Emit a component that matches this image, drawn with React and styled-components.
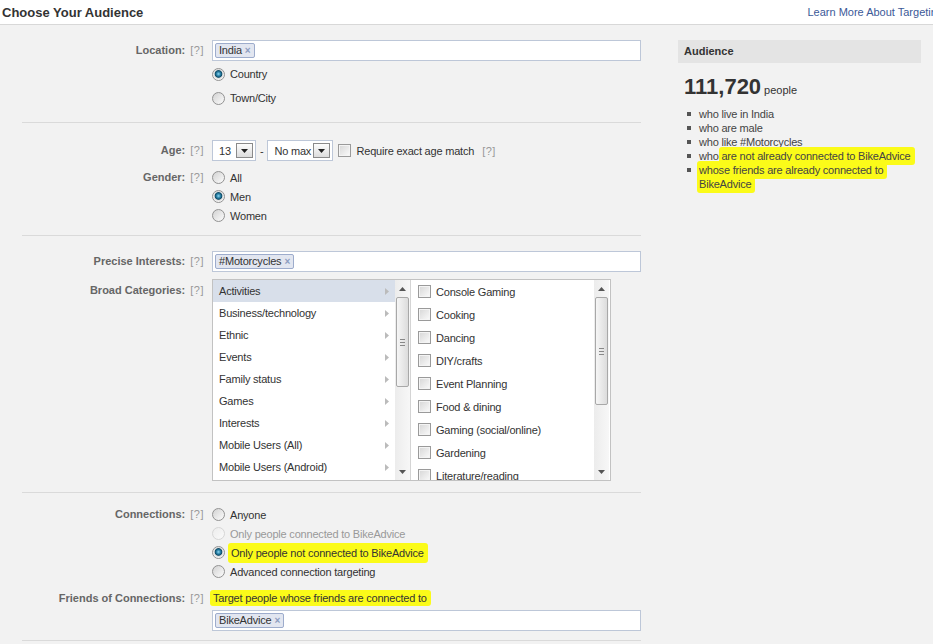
import styled, { createGlobalStyle } from "styled-components";

const GlobalStyle = createGlobalStyle`
    html, body {
        margin: 0;
        padding: 0;
    }
    body {
        background: #f2f2f2;
        font-family: "Liberation Sans", Arial, sans-serif;
        font-size: 11px;
        color: #333;
        overflow: hidden;
    }
`

const categories = [
    "Activities",
    "Business/technology",
    "Ethnic",
    "Events",
    "Family status",
    "Games",
    "Interests",
    "Mobile Users (All)",
    "Mobile Users (Android)",
]

const activities = [
    "Console Gaming",
    "Cooking",
    "Dancing",
    "DIY/crafts",
    "Event Planning",
    "Food & dining",
    "Gaming (social/online)",
    "Gardening",
    "Literature/reading",
]

function Token({ children }) {
    return (
        <Chip>
            {children}
            <ChipX>×</ChipX>
        </Chip>
    )
}

function Choice({ checked, disabled, height, children }) {
    return (
        <ChoiceRow $h={height} $disabled={disabled}>
            <Radio $checked={checked} $disabled={disabled} />
            {children}
        </ChoiceRow>
    )
}

function Dropdown({ value, width }) {
    return (
        <SelectBox $w={width}>
            <span>{value}</span>
            <DropBtn>
                <svg width="7" height="4" viewBox="0 0 7 4">
                    <path d="M0 0h7L3.5 4z" fill="#222" />
                </svg>
            </DropBtn>
        </SelectBox>
    )
}

function Scroll({ thumb }) {
    return (
        <ScrollTrack>
            <ScrollArrow>
                <svg width="7" height="4" viewBox="0 0 7 4">
                    <path d="M0 4h7L3.5 0z" fill="#555" />
                </svg>
            </ScrollArrow>
            <Thumb $h={thumb}>
                <Grip />
            </Thumb>
            <ScrollArrow $bottom>
                <svg width="7" height="4" viewBox="0 0 7 4">
                    <path d="M0 0h7L3.5 4z" fill="#555" />
                </svg>
            </ScrollArrow>
        </ScrollTrack>
    )
}

function Label({ text, line }) {
    return (
        <FieldLabel $line={line}>
            {text}
            <Help>[?]</Help>
        </FieldLabel>
    )
}

export default function App() {
    return (
        <>
            <GlobalStyle />
            <Header>
                <Title>Choose Your Audience</Title>
                <LearnMore>Learn More About Targeting</LearnMore>
            </Header>
            <Main>
                <Form>
                    <Section $pad="15px 0 12px">
                        <Row>
                            <Label text="Location:" line={21} />
                            <Control>
                                <TokenInput>
                                    <Token>India</Token>
                                </TokenInput>
                                <Choices $top={1}>
                                    <Choice checked height={24}>Country</Choice>
                                    <Choice height={24}>Town/City</Choice>
                                </Choices>
                            </Control>
                        </Row>
                    </Section>

                    <Section $pad="17px 0 10px">
                        <Row>
                            <Label text="Age:" line={21} />
                            <Control $inline>
                                <Dropdown value="13" width={44} />
                                <Dash>-</Dash>
                                <Dropdown value="No max" width={66} />
                                <Checkbox $left={5} />
                                <CheckText>Require exact age match</CheckText>
                                <Help $gap={8}>[?]</Help>
                            </Control>
                        </Row>
                        <Row $top={7}>
                            <Label text="Gender:" line={19} />
                            <Control>
                                <Choice height={19}>All</Choice>
                                <Choice checked height={19}>Men</Choice>
                                <Choice height={19}>Women</Choice>
                            </Control>
                        </Row>
                    </Section>

                    <Section $pad="15px 0 11px">
                        <Row>
                            <Label text="Precise Interests:" line={21} />
                            <Control>
                                <TokenInput>
                                    <Token>#Motorcycles</Token>
                                </TokenInput>
                            </Control>
                        </Row>
                        <Row $top={7}>
                            <Label text="Broad Categories:" line={22} />
                            <Control>
                                <Browser>
                                    <Pane $w={182}>
                                        {categories.map((c, i) => (
                                            <Category key={c} $active={i === 0}>
                                                {c}
                                                <svg width="4" height="7" viewBox="0 0 4 7">
                                                    <path d="M0 0l4 3.5L0 7z" fill="#bbb" />
                                                </svg>
                                            </Category>
                                        ))}
                                    </Pane>
                                    <Scroll thumb={90} />
                                    <PaneDivider />
                                    <Pane $w={183}>
                                        {activities.map((a) => (
                                            <Option key={a}>
                                                <Checkbox />
                                                <span>{a}</span>
                                            </Option>
                                        ))}
                                    </Pane>
                                    <Scroll thumb={108} />
                                </Browser>
                            </Control>
                        </Row>
                    </Section>

                    <Section $pad="12px 0 9px">
                        <Row>
                            <Label text="Connections:" line={19} />
                            <Control>
                                <Choice height={19}>Anyone</Choice>
                                <Choice disabled height={19}>Only people connected to BikeAdvice</Choice>
                                <Choice checked height={19}>
                                    <Mark>Only people not connected to BikeAdvice</Mark>
                                </Choice>
                                <Choice height={19}>Advanced connection targeting</Choice>
                            </Control>
                        </Row>
                        <Row $top={8}>
                            <Label text="Friends of Connections:" line={18} />
                            <Control>
                                <PlainLine>
                                    <Mark $tight>Target people whose friends are connected to</Mark>
                                </PlainLine>
                                <TokenInput $top={3}>
                                    <Token>BikeAdvice</Token>
                                </TokenInput>
                            </Control>
                        </Row>
                    </Section>
                </Form>

                <Sidebar>
                    <AudienceHead>Audience</AudienceHead>
                    <Count>
                        111,720<People>people</People>
                    </Count>
                    <Facts>
                        <li>who live in India</li>
                        <li>who are male</li>
                        <li>who like #Motorcycles</li>
                        <li>
                            who <Mark $side>are not already connected to BikeAdvice</Mark>
                        </li>
                        <li>
                            <Mark $side>whose friends are already connected to BikeAdvice</Mark>
                        </li>
                    </Facts>
                </Sidebar>
            </Main>
        </>
    )
}

const Header = styled.div`
    height: 24px;
    background: #fff;
    border-bottom: 1px solid #d8d8d8;
    display: flex;
    align-items: center;
    justify-content: space-between;
    padding-left: 2px;
    overflow: hidden;
    white-space: nowrap;
`
const Title = styled.h1`
    margin: 0;
    font-size: 13px;
    font-weight: bold;
    color: #333;
`
const LearnMore = styled.a`
    color: #3b5998;
    font-size: 11px;
    margin-right: -10px;
    cursor: pointer;
`
const Main = styled.div`
    display: flex;
`
const Form = styled.div`
    width: 678px;
    box-sizing: border-box;
    padding-left: 22px;
`
const Section = styled.div`
    width: 619px;
    padding: ${(p) => p.$pad};
    border-bottom: 1px solid #dadada;
`
const Row = styled.div`
    display: flex;
    margin-top: ${(p) => p.$top || 0}px;
`
const FieldLabel = styled.div`
    width: 182px;
    flex-shrink: 0;
    text-align: right;
    font-weight: bold;
    color: #666;
    line-height: ${(p) => p.$line}px;
    white-space: nowrap;
`
const Help = styled.span`
    font-weight: normal;
    color: #999;
    margin-left: ${(p) => p.$gap || 5}px;
    letter-spacing: 0.5px;
`
const Control = styled.div`
    margin-left: 8px;
    width: 429px;
    letter-spacing: -0.2px;
    ${(p) => p.$inline && "display: flex; align-items: center; height: 21px;"}
`
const TokenInput = styled.div`
    height: 21px;
    box-sizing: border-box;
    margin-top: ${(p) => p.$top || 0}px;
    border: 1px solid #bdc7d8;
    background: #fff;
    display: flex;
    align-items: center;
    padding-left: 2px;
`
const Chip = styled.span`
    height: 15px;
    box-sizing: border-box;
    line-height: 13px;
    border: 1px solid #9daccc;
    background: #e2e6f0;
    border-radius: 2px;
    padding: 0 3px;
    color: #333;
`
const ChipX = styled.span`
    color: #8d9cc0;
    font-size: 10px;
    font-weight: bold;
    margin-left: 3px;
`
const Choices = styled.div`
    margin-top: ${(p) => p.$top || 0}px;
`
const ChoiceRow = styled.div`
    height: ${(p) => p.$h}px;
    display: flex;
    align-items: center;
    color: ${(p) => (p.$disabled ? "#999" : "#333")};
    white-space: nowrap;
`
const Radio = styled.span`
    width: 13px;
    height: 13px;
    box-sizing: border-box;
    border-radius: 50%;
    flex-shrink: 0;
    margin-right: 5px;
    border: 1px solid ${(p) => (p.$disabled ? "#d6d6d6" : "#929292")};
    background: ${(p) =>
        p.$checked
            ? "radial-gradient(circle at 50% 45%, #8fd8f2 0, #2b82a8 2px, #0f4d69 3.4px, #dcdcdc 4.2px, #fbfbfb 6px)"
            : p.$disabled
            ? "linear-gradient(135deg, #ececec, #fafafa)"
            : "linear-gradient(135deg, #d2d2d2, #fcfcfc)"};
`
const SelectBox = styled.div`
    width: ${(p) => p.$w}px;
    height: 21px;
    box-sizing: border-box;
    border: 1px solid #bdc7d8;
    background: #fff;
    display: flex;
    align-items: center;
    justify-content: space-between;
    padding: 0 2px 0 6px;
    flex-shrink: 0;
    white-space: nowrap;
`
const DropBtn = styled.span`
    width: 17px;
    height: 15px;
    box-sizing: border-box;
    border: 1px solid #8a8a8a;
    background: linear-gradient(#fdfdfd, #dcdcdc);
    display: flex;
    align-items: center;
    justify-content: center;
`
const Dash = styled.span`
    margin: 0 4px;
    color: #333;
`
const Checkbox = styled.span`
    width: 13px;
    height: 13px;
    box-sizing: border-box;
    flex-shrink: 0;
    margin-left: ${(p) => p.$left || 0}px;
    border: 1px solid #9a9a9a;
    background: linear-gradient(135deg, #d6d6d6, #fbfbfb);
    box-shadow: inset 0 0 0 1px #f4f4f4;
`
const CheckText = styled.span`
    margin-left: 5px;
    color: #333;
    white-space: nowrap;
`
const Browser = styled.div`
    width: 399px;
    height: 202px;
    box-sizing: border-box;
    border: 1px solid #c2c2c2;
    background: #fff;
    display: flex;
    overflow: hidden;
`
const Pane = styled.div`
    width: ${(p) => p.$w}px;
    overflow: hidden;
    flex-shrink: 0;
`
const Category = styled.div`
    height: 22px;
    display: flex;
    align-items: center;
    justify-content: space-between;
    padding: 0 6px 0 6px;
    background: ${(p) => (p.$active ? "#d8dfea" : "transparent")};
    color: #333;
    white-space: nowrap;
`
const Option = styled.div`
    height: 23px;
    display: flex;
    align-items: center;
    gap: 5px;
    padding-left: 7px;
    color: #333;
    white-space: nowrap;
`
const PaneDivider = styled.div`
    width: 1px;
    background: #d4d4d4;
    flex-shrink: 0;
`
const ScrollTrack = styled.div`
    width: 15px;
    flex-shrink: 0;
    background: linear-gradient(to right, #ececec, #f7f7f7);
    display: flex;
    flex-direction: column;
    align-items: center;
`
const ScrollArrow = styled.div`
    height: 17px;
    width: 15px;
    display: flex;
    align-items: center;
    justify-content: center;
    margin-top: ${(p) => (p.$bottom ? "auto" : "0")};
`
const Thumb = styled.div`
    width: 13px;
    height: ${(p) => p.$h}px;
    box-sizing: border-box;
    border: 1px solid #a8a8a8;
    border-radius: 2px;
    background: linear-gradient(to right, #f6f6f6, #dcdcdc);
    display: flex;
    align-items: center;
    justify-content: center;
`
const Grip = styled.span`
    width: 5px;
    height: 5px;
    border-top: 1px solid #888;
    border-bottom: 1px solid #888;
    background: linear-gradient(#888, #888) center / 100% 1px no-repeat;
`
const PlainLine = styled.div`
    height: 18px;
    display: flex;
    align-items: center;
    white-space: nowrap;
    color: #333;
`
const Mark = styled.span`
    background: #fbfb19;
    padding: ${(p) => (p.$tight ? "2px 4px 2px 3px" : p.$side ? "3px 4px 3px 2px" : "4px 4px 4px 3px")};
    margin: 0 -3px 0 -2px;
    border-radius: 3px;
    box-decoration-break: clone;
    -webkit-box-decoration-break: clone;
`
const Sidebar = styled.div`
    width: 243px;
    padding-top: 15px;
`
const AudienceHead = styled.div`
    height: 23px;
    line-height: 23px;
    background: #e4e4e4;
    padding-left: 6px;
    font-weight: bold;
    color: #333;
`
const Count = styled.div`
    margin-top: 11px;
    padding-left: 6px;
    font-size: 22px;
    line-height: 26px;
    font-weight: bold;
    color: #333;
`
const People = styled.span`
    font-size: 11px;
    font-weight: normal;
    margin-left: 3px;
`
const Facts = styled.ul`
    list-style: none;
    margin: 4px 0 0;
    padding: 0 0 0 21px;
    color: #444;
    line-height: 14px;
    letter-spacing: -0.2px;

    && li {
        position: relative;
    }
    && li:nth-child(4) {
        white-space: nowrap;
    }
    && li::before {
        content: "";
        position: absolute;
        left: -12px;
        top: 5px;
        width: 4px;
        height: 4px;
        background: #555;
    }
`
